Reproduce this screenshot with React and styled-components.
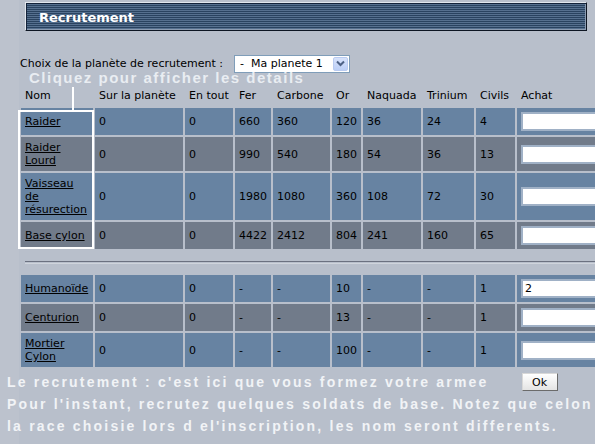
import styled, { createGlobalStyle } from "styled-components";

const Global = createGlobalStyle`
  html, body {
    margin: 0;
    padding: 0;
    overflow: hidden;
    background: #b8bfcb;
  }
  body {
    font-family: "DejaVu Sans", Verdana, sans-serif;
    font-size: 11px;
    color: #000;
  }
`;

const Page = styled.div`
  position: relative;
  display: flex;
  width: 595px;
  height: 444px;
  overflow: hidden;
`;

const Strip = styled.div`
  flex: 0 0 19px;
  background: #bcc2cd;
`;

const Main = styled.div`
  flex: 1;
  min-width: 0;
`;

const TitleBar = styled.div`
  display: flex;
  align-items: center;
  box-sizing: border-box;
  width: 562px;
  height: 29px;
  margin: 2px 0 0 6px;
  padding: 2px 0 0 13px;
  border: 1px solid;
  border-color: #e2e7ee #0d1522 #0d1522 #e2e7ee;
  box-shadow: inset 1px 1px 0 #14233a, inset -1px -1px 0 #8b9bb1;
  background: repeating-linear-gradient(to bottom, #2a4360 0 1px, #56708f 1px 2px);
`;

const Title = styled.span`
  color: #fff;
  font-weight: bold;
  font-size: 13px;
`;

const PlanetRow = styled.div`
  display: flex;
  align-items: center;
  gap: 11px;
  height: 17px;
  margin: 24px 0 0 1px;
  white-space: nowrap;
`;

const FakeSelect = styled.div`
  display: flex;
  align-items: center;
  justify-content: space-between;
  box-sizing: border-box;
  width: 116px;
  height: 18px;
  padding: 0 1px 0 5px;
  border: 1px solid #7f9db9;
  background: #fff;
  white-space: pre;
`;

const ArrowBox = styled.span`
  display: flex;
  align-items: center;
  justify-content: center;
  width: 15px;
  height: 14px;
  box-sizing: border-box;
  border: 1px solid #b9cbf1;
  border-radius: 2px;
  background: linear-gradient(#d7e2fb, #bccff7);
`;

const UnitTable = styled.table`
  table-layout: fixed;
  width: 600px;
  border-collapse: separate;
  border-spacing: 2px;
  margin-top: ${(p) => p.$top || 0}px;
`;

const Col = styled.col`
  width: ${(p) => p.$w}px;
`;

const Head = styled.th`
  padding: 4px;
  line-height: 13px;
  font-weight: normal;
  text-align: left;
  white-space: nowrap;
`;

const Row = styled.tr`
  td {
    background: ${(p) => (p.$alt ? "#717b8a" : "#6783a2")};
  }
`;

const Cell = styled.td`
  padding: 4px;
  line-height: 13px;
  vertical-align: middle;
`;

const UnitLink = styled.a`
  color: #000;
  text-decoration: underline;
`;

const Qty = styled.input`
  display: block;
  box-sizing: border-box;
  width: 100px;
  height: 19px;
  margin: 0;
  padding: 0 2px;
  border: 2px solid #a0b1c6;
  background: #fff;
  font-family: "DejaVu Sans", Verdana, sans-serif;
  font-size: 11px;
  color: #000;
  outline: none;
`;

const Rule = styled.div`
  height: 1px;
  margin: 10px 0 9px 6px;
  border-top: 1px solid #6b7180;
  border-bottom: 1px solid #cfd4dc;
`;

const Hint = styled.div`
  position: absolute;
  left: 29px;
  top: 69px;
  color: #e9edf2;
  font-family: "Liberation Sans", Arial, sans-serif;
  font-weight: bold;
  font-size: 15px;
  line-height: 17px;
  letter-spacing: 1.5px;
  white-space: nowrap;
`;

const Highlight = styled.div`
  position: absolute;
  left: 18px;
  top: 110px;
  width: 72px;
  height: 135px;
  border: 2px solid #fff;
`;

const Connector = styled.div`
  position: absolute;
  left: 72px;
  top: 87px;
  width: 2px;
  height: 23px;
  background: #fff;
`;

const Message = styled.div`
  position: absolute;
  left: 7px;
  top: 371px;
  color: #f1f3f6;
  font-family: "Liberation Sans", Arial, sans-serif;
  font-weight: bold;
  font-size: 14px;
  line-height: 22px;
  letter-spacing: 2.2px;
  white-space: nowrap;
`;

const MsgLine = styled.div`
  display: flex;
  align-items: center;
`;

const OkButton = styled.button`
  width: 36px;
  height: 18px;
  margin-left: 33px;
  padding: 0;
  border: 1px solid;
  border-color: #d8d8d8 #6b6b6b #6b6b6b #d8d8d8;
  background: linear-gradient(#ffffff, #e4e4e4);
  font-family: "DejaVu Sans", Verdana, sans-serif;
  font-size: 11px;
  letter-spacing: 0;
  color: #000;
`;

const widths = [72, 88, 48, 36, 57, 29, 58, 51, 39, 100];
const headers = ["Nom", "Sur la planète", "En tout", "Fer", "Carbone", "Or", "Naquada", "Trinium", "Civils", "Achat"];

const ships = [
  ["Raider", "0", "0", "660", "360", "120", "36", "24", "4", ""],
  ["Raider Lourd", "0", "0", "990", "540", "180", "54", "36", "13", ""],
  ["Vaisseau de résurection", "0", "0", "1980", "1080", "360", "108", "72", "30", ""],
  ["Base cylon", "0", "0", "4422", "2412", "804", "241", "160", "65", ""],
];

const troops = [
  ["Humanoïde", "0", "0", "-", "-", "10", "-", "-", "1", "2"],
  ["Centurion", "0", "0", "-", "-", "13", "-", "-", "1", ""],
  ["Mortier Cylon", "0", "0", "-", "-", "100", "-", "-", "1", ""],
];

function Cols() {
  return (
    <colgroup>
      {widths.map((w, i) => (
        <Col key={i} $w={w} />
      ))}
    </colgroup>
  );
}

function UnitRow({ unit, alt }) {
  const [name, ...vals] = unit;
  const amount = vals.pop();
  return (
    <Row $alt={alt}>
      <Cell>
        <UnitLink href="#">{name}</UnitLink>
      </Cell>
      {vals.map((v, i) => (
        <Cell key={i}>{v}</Cell>
      ))}
      <Cell>
        <Qty type="text" defaultValue={amount} />
      </Cell>
    </Row>
  );
}

export default function App() {
  return (
    <>
      <Global />
      <Page>
        <Strip />
        <Main>
          <TitleBar>
            <Title>Recrutement</Title>
          </TitleBar>
          <PlanetRow>
            Choix de la planète de recrutement :
            <FakeSelect>
              <span>-  Ma planete 1</span>
              <ArrowBox>
                <svg width="9" height="7" viewBox="0 0 9 7">
                  <path d="M1 1.5 L4.5 5 L8 1.5" fill="none" stroke="#4d6185" strokeWidth="2" />
                </svg>
              </ArrowBox>
            </FakeSelect>
          </PlanetRow>
          <UnitTable $top={11}>
            <Cols />
            <tbody>
              <tr>
                {headers.map((h) => (
                  <Head key={h}>{h}</Head>
                ))}
              </tr>
              {ships.map((u, i) => (
                <UnitRow key={u[0]} unit={u} alt={i % 2 === 1} />
              ))}
            </tbody>
          </UnitTable>
          <Rule />
          <UnitTable>
            <Cols />
            <tbody>
              {troops.map((u, i) => (
                <UnitRow key={u[0]} unit={u} alt={i % 2 === 1} />
              ))}
            </tbody>
          </UnitTable>
        </Main>

        <Hint>Cliquez pour afficher les details</Hint>
        <Connector />
        <Highlight />
        <Message>
          <MsgLine>
            Le recrutement : c'est ici que vous formez votre armee
            <OkButton>Ok</OkButton>
          </MsgLine>
          <div>Pour l'instant, recrutez quelques soldats de base. Notez que celon</div>
          <div>la race choisie lors d el'inscription, les nom seront differents.</div>
        </Message>
      </Page>
    </>
  );
}
